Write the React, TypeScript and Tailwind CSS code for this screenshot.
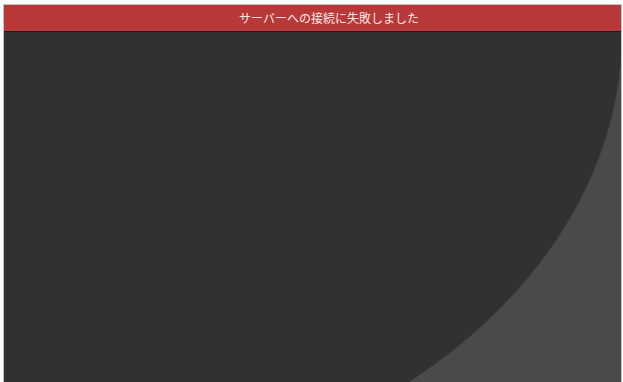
export default function App() {
  return (
    <div className="flex h-[382px] w-[623px] flex-col bg-white pl-[3px] pr-[1px] pt-[4px]">
      <div className="flex min-h-0 flex-1 flex-col border-l border-r border-t border-[#c4c4c4]">
        <header
          className="flex h-[27px] shrink-0 items-center justify-center border-b border-[#1c1c1c] bg-[#b83838] pl-[33px] text-[12px] text-[#fbeaea]"
          style={{ fontFamily: '"Noto Sans CJK JP", "Noto Sans", sans-serif' }}
        >
          サーバーへの接続に失敗しました
        </header>
        <main className="flex-1 bg-[radial-gradient(ellipse_619px_464px_at_0_0,#313131_99.7%,#4a4a4a_100%)]" />
      </div>
    </div>
  );
}
